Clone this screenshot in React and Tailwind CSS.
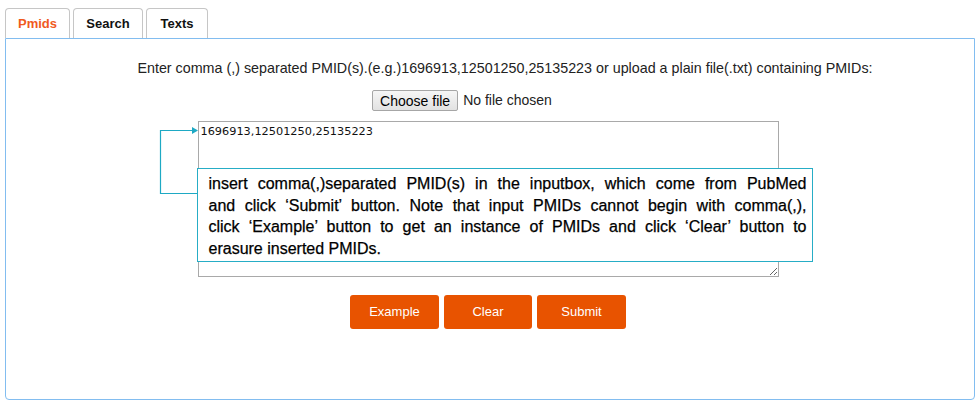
import React from "react";

export default function App() {
  const tabBase =
    "h-[30px] flex items-center justify-center border border-b-0 border-[#c6c6c6] rounded-t-[4px] bg-white text-[13px] font-bold";
  return (
    <div className="w-[980px] h-[404px] bg-white pt-2 px-[5px]" style={{ fontFamily: '"Liberation Sans", Arial, sans-serif' }}>
      <div className="flex gap-[3px]">
        <div className={`${tabBase} w-[65px] text-[#f05a1e]`}>Pmids</div>
        <div className={`${tabBase} w-[70px] text-[#111]`}>Search</div>
        <div className={`${tabBase} w-[62px] text-[#111]`}>Texts</div>
      </div>
      <div className="h-[362px] border border-[#82bdf0] rounded-b-[4px] flex flex-col items-center pt-[19px]">
        <p className="pl-[30px] text-[14.3px] leading-[20px] text-[#222]">
          Enter comma (,) separated PMID(s).(e.g.)1696913,12501250,25135223 or upload a plain file(.txt) containing PMIDs:
        </p>
        <div className="mt-[12px] mr-[56px] h-[21px] flex items-center text-[14px] text-[#222]">
          <button className="h-[21px] w-[86px] border border-[#a6a6a6] rounded-[2px] bg-gradient-to-b from-[#f6f6f6] to-[#e2e2e2] text-[14px] text-black leading-none">
            Choose file
          </button>
          <span className="ml-[5px]">No file chosen</span>
        </div>
        <div className="relative mt-[10px] mr-[4px] w-[581px] h-[156px]">
          <textarea
            defaultValue="1696913,12501250,25135223"
            className="block w-full h-full border border-[#a9a9a9] px-[2px] py-[3px] text-[11.3px] leading-[14px] text-[#111] outline-none resize"
            style={{ fontFamily: '"DejaVu Sans", Verdana, sans-serif' }}
          />
          <svg className="absolute left-[-43px] top-[4px]" width="44" height="74" viewBox="0 0 44 74">
            <path d="M5.5 5.5 H38 M5.5 5 V68.5 H42" stroke="#1ea9c4" strokeWidth="1.2" fill="none" />
            <path d="M37 2 L43 5.5 L37 9 Z" fill="#1ea9c4" />
          </svg>
          <div className="absolute left-[-1px] top-[47px] w-[616px] h-[94px] bg-white border border-[#26adc6] pl-[11px] pr-[5px] pt-[4px] text-[16px] leading-[21.6px] text-black [-webkit-text-stroke:0.25px_#000]">
            <div className="whitespace-nowrap text-justify [text-align-last:justify]">
              insert comma(,)separated PMID(s) in the inputbox, which come from PubMed
            </div>
            <div className="whitespace-nowrap text-justify [text-align-last:justify]">
              and click ‘Submit’ button. Note that input PMIDs cannot begin with comma(,),
            </div>
            <div className="whitespace-nowrap text-justify [text-align-last:justify]">
              click ‘Example’ button to get an instance of PMIDs and click ‘Clear’ button to
            </div>
            <div className="whitespace-nowrap">erasure inserted PMIDs.</div>
          </div>
        </div>
        <div className="mt-[18px] mr-[4px] flex gap-[5px]">
          <button className="w-[89px] h-[34px] rounded-[3px] bg-[#e85300] text-white text-[13px]">Example</button>
          <button className="w-[88px] h-[34px] rounded-[3px] bg-[#e85300] text-white text-[13px]">Clear</button>
          <button className="w-[89px] h-[34px] rounded-[3px] bg-[#e85300] text-white text-[13px]">Submit</button>
        </div>
      </div>
    </div>
  );
}
